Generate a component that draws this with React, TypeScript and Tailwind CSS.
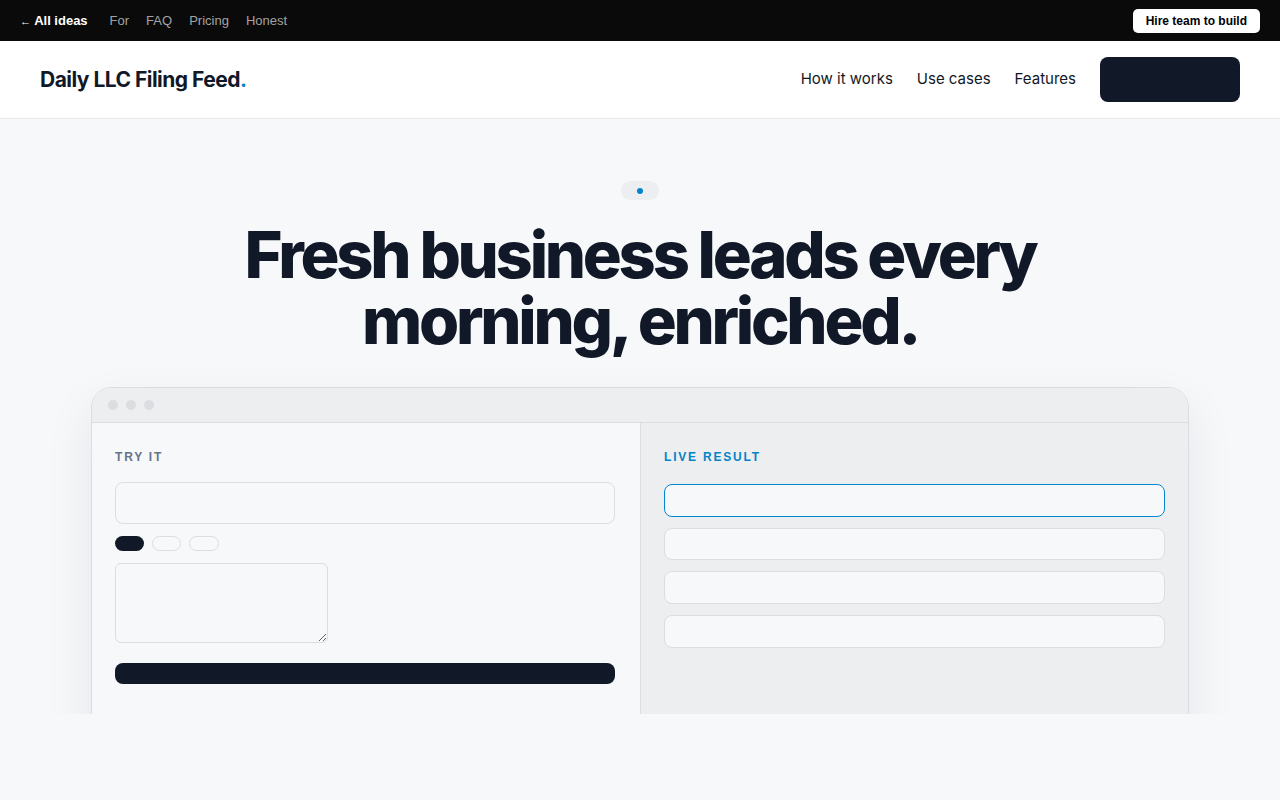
const sans = "font-['Liberation_Sans',Arial,sans-serif]";
const display = "font-['Inter','Noto_Sans',sans-serif]";

function TopBar() {
  return (
    <div className={`flex h-[41px] shrink-0 items-center justify-between bg-[#0a0a0a] px-5 text-[13px] ${sans}`}>
      <div className="flex items-center">
        <a className="font-bold text-white">
          <span className="text-[11px]">←</span> All ideas
        </a>
        <nav className="ml-[22px] flex gap-[17px] text-[#a3a3a3]">
          <a>For</a>
          <a>FAQ</a>
          <a>Pricing</a>
          <a>Honest</a>
        </nav>
      </div>
      <button className="h-6 rounded-[5px] bg-white px-[13px] text-[12px] font-bold text-black">
        Hire team to build
      </button>
    </div>
  );
}

function Header() {
  return (
    <header className={`flex h-[78px] items-center justify-between border-b border-[#e5e7eb] bg-white px-10 ${display}`}>
      <div className="text-[21px] font-bold tracking-[-0.025em] text-[#111827]">
        Daily LLC Filing Feed<span className="text-[#0284c7]">.</span>
      </div>
      <div className="flex items-center">
        <nav className="flex gap-6 text-[15px] text-[#111827]">
          <a>How it works</a>
          <a>Use cases</a>
          <a>Features</a>
        </nav>
        <button className="ml-6 h-[45px] w-[140px] rounded-lg bg-[#111827]" />
      </div>
    </header>
  );
}

function TryPane() {
  return (
    <div className="flex flex-col bg-[#f7f8fa] pl-[23px] pr-[25px] pt-[25px]">
      <div className={`text-[12px] font-bold tracking-[0.15em] text-[#64748b] ${sans}`}>TRY IT</div>
      <input className="mt-4 h-[42px] shrink-0 rounded-lg border border-[#dcdde0] bg-[#f7f8fa]" />
      <div className="mt-[12px] flex gap-2">
        <span className="h-[15px] w-[29px] rounded-full bg-[#111827]" />
        <span className="h-[15px] w-[29px] rounded-full border border-[#dcdde0]" />
        <span className="h-[15px] w-[30px] rounded-full border border-[#dcdde0]" />
      </div>
      <textarea className="mt-3 h-20 w-[213px] shrink-0 rounded-md border border-[#dcdde0] bg-[#f7f8fa]" />
      <button className="mt-5 h-[21px] shrink-0 rounded-lg bg-[#111827]" />
    </div>
  );
}

function ResultPane() {
  return (
    <div className="flex flex-col border-l border-[#dcdde0] bg-[#edeef0] px-[23px] pt-[25px]">
      <div className={`text-[12px] font-bold tracking-[0.15em] text-[#0284c7] ${sans}`}>LIVE RESULT</div>
      <div className="mt-[18px] flex flex-col gap-[11px]">
        <div className="h-[33px] rounded-lg border border-[#0288d1] bg-[#f7f8fa]" />
        <div className="h-[32px] rounded-lg border border-[#dcdde0] bg-[#f7f8fa]" />
        <div className="h-[33px] rounded-lg border border-[#dcdde0] bg-[#f7f8fa]" />
        <div className="h-[33px] rounded-lg border border-[#dcdde0] bg-[#f7f8fa]" />
      </div>
    </div>
  );
}

export default function App() {
  return (
    <div className="min-h-[800px] bg-[#f7f8fa]">
      <TopBar />
      <Header />
      <section className="flex h-[595px] flex-col items-center overflow-hidden pt-[62px]">
        <div className="flex h-[19px] w-[38px] shrink-0 items-center justify-center rounded-full bg-[#eceef1]">
          <span className="h-[6px] w-[6px] rounded-full bg-[#0284c7]" />
        </div>
        <h1
          className={`mt-[22px] shrink-0 text-center text-[65px] font-extrabold leading-[66px] tracking-[-0.05em] text-[#111827] ${display}`}
        >
          Fresh business leads every
          <br />
          morning, enriched.
        </h1>
        <div className="mt-[33px] w-[1098px] shrink-0 overflow-hidden rounded-t-[20px] border border-[#dcdde0] shadow-[0_20px_50px_rgba(15,23,42,0.08)]">
          <div className="flex h-[35px] items-center gap-[8px] border-b border-[#dcdde0] bg-[#edeef0] pl-4">
            <span className="h-[10px] w-[10px] rounded-full bg-[#dcdde0]" />
            <span className="h-[10px] w-[10px] rounded-full bg-[#dcdde0]" />
            <span className="h-[10px] w-[10px] rounded-full bg-[#dcdde0]" />
          </div>
          <div className="grid h-[320px] grid-cols-2">
            <TryPane />
            <ResultPane />
          </div>
        </div>
      </section>
    </div>
  );
}
